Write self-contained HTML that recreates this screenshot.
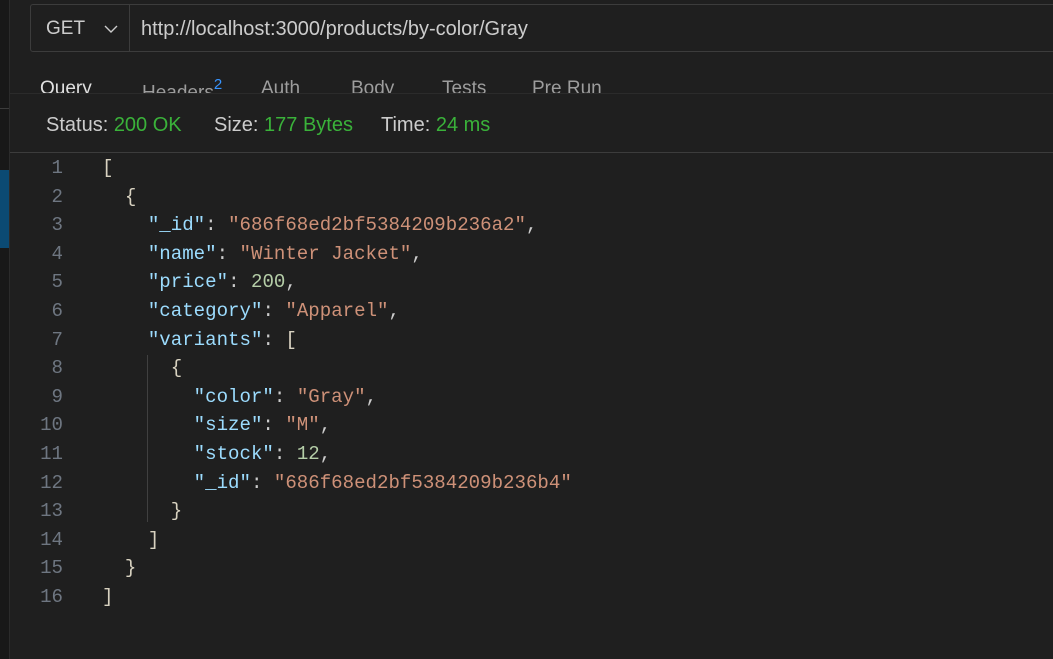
<!DOCTYPE html>
<html><head><style>
html,body{margin:0;padding:0;background:#1f1f1f;width:1053px;height:659px;overflow:hidden;font-family:"Liberation Sans",sans-serif;}
.left{position:absolute;left:0;top:0;width:9px;height:659px;background:#181818;border-right:1px solid #2b2b2b;}
.left .sel{position:absolute;left:0;top:170px;width:9px;height:78px;background:#0b4a73;}
.left .ln{position:absolute;left:0;top:108px;width:9px;height:1px;background:#3c3c3c;}
.url{position:absolute;left:30px;top:4px;width:1040px;height:48px;border:1px solid #3c3c3c;border-radius:3px;box-sizing:border-box;background:#1f1f1f;}
.url .m{position:absolute;left:15px;top:13px;font-size:19px;color:#cccccc;}
.url .div{position:absolute;left:98px;top:0;width:1px;height:46px;background:#3c3c3c;}
.url .u{position:absolute;left:110px;top:13px;font-size:20px;color:#cccccc;}
.tabs{position:absolute;left:0;top:0;width:1053px;height:93px;overflow:hidden;}
.tabs span{position:absolute;top:78px;font-size:19px;color:#9d9d9d;}
.status{position:absolute;left:10px;top:93px;width:1043px;height:60px;border-top:1px solid #2b2b2b;border-bottom:1px solid #3c3c3c;box-sizing:border-box;}
.status span{position:absolute;top:20px;font-size:20px;color:#cccccc;}
.status b{font-weight:normal;color:#3ab23a;}
.code{position:absolute;left:0;top:154px;font-family:"Liberation Mono",monospace;font-size:19.1px;}
.row{position:absolute;height:28.6px;line-height:28.6px;white-space:pre;}
.n{position:absolute;left:0;width:63px;text-align:right;color:#6e7681;}
.t{position:absolute;left:102px;color:#cccccc;}
.k{color:#9cdcfe}.s{color:#ce9178}.d{color:#b5cea8}.b{color:#d8d2c0}
.guide{position:absolute;left:147px;top:355px;width:1px;height:167px;background:#404040;}
</style></head><body>
<div class="left"><div class="sel"></div><div class="ln"></div></div>
<div class="url"><span class="m">GET</span>
<svg style="position:absolute;left:72px;top:19px" width="16" height="10" viewBox="0 0 16 10"><path d="M2 2 L8 8 L14 2" stroke="#cccccc" stroke-width="1.4" fill="none"/></svg>
<div class="div"></div><span class="u">http://localhost:3000/products/by-color/Gray</span></div>
<div class="tabs">
<span style="left:40px;color:#e0e0e0">Query</span>
<span style="left:142px">Headers<sup style="color:#3794ff;font-size:15px;position:relative;top:-2px">2</sup></span>
<span style="left:261px">Auth</span>
<span style="left:351px">Body</span>
<span style="left:442px">Tests</span>
<span style="left:532px">Pre Run</span>
</div>
<div class="status">
<span style="left:36px">Status: <b>200 OK</b></span>
<span style="left:204px">Size: <b>177 Bytes</b></span>
<span style="left:371px">Time: <b>24 ms</b></span>
</div>
<div class="guide"></div>
<div class="code">
<div class="row" style="top:0"><span class="n">1</span><span class="t"><span class="b">[</span></span></div>
<div class="row" style="top:28.6px"><span class="n">2</span><span class="t">  <span class="b">{</span></span></div>
<div class="row" style="top:57.2px"><span class="n">3</span><span class="t">    <span class="k">"_id"</span>: <span class="s">"686f68ed2bf5384209b236a2"</span>,</span></div>
<div class="row" style="top:85.8px"><span class="n">4</span><span class="t">    <span class="k">"name"</span>: <span class="s">"Winter Jacket"</span>,</span></div>
<div class="row" style="top:114.4px"><span class="n">5</span><span class="t">    <span class="k">"price"</span>: <span class="d">200</span>,</span></div>
<div class="row" style="top:143px"><span class="n">6</span><span class="t">    <span class="k">"category"</span>: <span class="s">"Apparel"</span>,</span></div>
<div class="row" style="top:171.6px"><span class="n">7</span><span class="t">    <span class="k">"variants"</span>: <span class="b">[</span></span></div>
<div class="row" style="top:200.2px"><span class="n">8</span><span class="t">      <span class="b">{</span></span></div>
<div class="row" style="top:228.8px"><span class="n">9</span><span class="t">        <span class="k">"color"</span>: <span class="s">"Gray"</span>,</span></div>
<div class="row" style="top:257.4px"><span class="n">10</span><span class="t">        <span class="k">"size"</span>: <span class="s">"M"</span>,</span></div>
<div class="row" style="top:286px"><span class="n">11</span><span class="t">        <span class="k">"stock"</span>: <span class="d">12</span>,</span></div>
<div class="row" style="top:314.6px"><span class="n">12</span><span class="t">        <span class="k">"_id"</span>: <span class="s">"686f68ed2bf5384209b236b4"</span></span></div>
<div class="row" style="top:343.2px"><span class="n">13</span><span class="t">      <span class="b">}</span></span></div>
<div class="row" style="top:371.8px"><span class="n">14</span><span class="t">    <span class="b">]</span></span></div>
<div class="row" style="top:400.4px"><span class="n">15</span><span class="t">  <span class="b">}</span></span></div>
<div class="row" style="top:429px"><span class="n">16</span><span class="t"><span class="b">]</span></span></div>
</div>
</body></html>
